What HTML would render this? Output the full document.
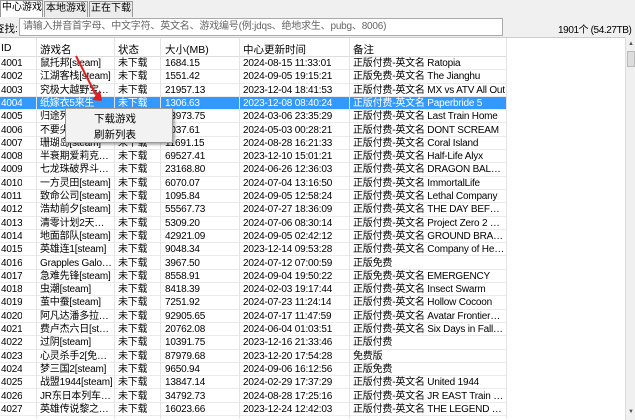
<!DOCTYPE html>
<html><head><meta charset="utf-8"><style>
*{margin:0;padding:0;box-sizing:border-box}
body{width:635px;height:420px;overflow:hidden;background:#f0f0f0;font-family:"Liberation Sans","Noto Sans CJK SC",sans-serif;font-size:10px;color:#000;position:relative;white-space:nowrap}
.tab{position:absolute;top:1px;height:16px;border:1px solid #999;border-bottom:none;background:#ececec;font-size:10px;line-height:14px;padding:0 1px;overflow:hidden;text-align:center}
.tab.a{background:#fff;top:0;height:17px}
#inp{position:absolute;left:19px;top:18px;width:484px;height:18px;background:#fff;border:1px solid #aaa;color:#666;font-size:10px;line-height:16px;padding-left:3px;overflow:hidden;letter-spacing:-0.2px}
#tbl{position:absolute;left:0;top:37px;width:625px;height:383px;background:#fff;border-top:1px solid #ccc}
.hd{position:absolute;top:0;height:19px;left:0;width:506px;background:#fff;border-bottom:1px solid #ddd}
.hd span{position:absolute;top:4px;font-size:10.5px}
.row{position:absolute;left:0;width:506px;height:13.3px;border-bottom:1px solid #ebebeb}
.row span{position:absolute;top:0;line-height:13px;font-size:10px;overflow:hidden;letter-spacing:-0.2px;text-overflow:ellipsis}
.sel{background:#3399ff;color:#fff}
.v{position:absolute;top:0;width:1px;height:381px;background:#e4e4e4}
#sb{position:absolute;left:625px;top:37px;width:10px;height:383px;background:#f0f0f0;border-left:1px solid #ddd}
#menu{position:absolute;left:65px;top:108px;width:108px;height:35px;background:#f2f2f2;border:1px solid #999;box-shadow:2px 2px 2px rgba(0,0,0,.3);font-size:10.5px}
#menu div{position:absolute;left:28px}
</style></head><body>
<div class="tab a" style="left:0;width:43px">中心游戏</div>
<div class="tab" style="left:44px;width:44px">本地游戏</div>
<div class="tab" style="left:89px;width:44px">正在下载</div>
<div style="position:absolute;left:-6px;top:21px;font-size:10.5px">查找:</div>
<div id="inp">请输入拼音首字母、中文字符、英文名、游戏编号(例:jdqs、绝地求生、pubg、8006)</div>
<div style="position:absolute;left:558px;top:21px;font-size:10px;letter-spacing:-0.4px">1901个 (54.27TB)</div>
<div id="tbl">
<div class="hd"><span style="left:1px">ID</span><span style="left:40px">游戏名</span><span style="left:118px">状态</span><span style="left:165px">大小(MB)</span><span style="left:243px">中心更新时间</span><span style="left:353px">备注</span></div>
<div id="rows"></div>
<div class="v" style="left:36px"></div><div class="v" style="left:114px"></div><div class="v" style="left:160px"></div><div class="v" style="left:239px"></div><div class="v" style="left:349px"></div><div class="v" style="left:506px"></div>
</div>
<div id="sb"><div style="position:absolute;left:1px;top:14px;width:8px;height:16px;background:#ddd;border:1px solid #bbb"></div><div style="position:absolute;left:2px;top:4px;font-size:6px;color:#555">▲</div><div style="position:absolute;left:2px;top:372px;font-size:6px;color:#555">▼</div></div>
<script>
var d=[
["4001","鼠托邦[steam]","1684.15","2024-08-15 11:33:01","正版付费-英文名 Ratopia"],
["4002","江湖客栈[steam]","1551.42","2024-09-05 19:15:21","正版免费-英文名 The Jianghu"],
["4003","究极大越野宝…","21957.13","2023-12-04 18:41:53","正版付费-英文名 MX vs ATV All Out"],
["4004","纸嫁衣5来生","1306.63","2023-12-08 08:40:24","正版付费-英文名 Paperbride 5"],
["4005","归途列车[steam]","23973.75","2024-03-06 23:35:29","正版付费-英文名 Last Train Home"],
["4006","不要尖叫[steam]","4037.61","2024-05-03 00:28:21","正版付费-英文名 DONT SCREAM"],
["4007","珊瑚岛[steam]","11691.15","2024-08-28 16:21:33","正版付费-英文名 Coral Island"],
["4008","半衰期爱莉克…","69527.41","2023-12-10 15:01:21","正版付费-英文名 Half-Life Alyx"],
["4009","七龙珠破界斗…","23168.80","2024-06-26 12:36:03","正版付费-英文名 DRAGON BALL TH..."],
["4010","一方灵田[steam]","6070.07","2024-07-04 13:16:50","正版付费-英文名 ImmortalLife"],
["4011","致命公司[steam]","1095.84","2024-09-05 12:58:24","正版付费-英文名 Lethal Company"],
["4012","浩劫前夕[steam]","55567.73","2024-07-27 18:36:09","正版付费-英文名 THE DAY BEFORE"],
["4013","清零计划2天…","5309.20","2024-07-06 08:30:14","正版付费-英文名 Project Zero 2 DE..."],
["4014","地面部队[steam]","42921.09","2024-09-05 02:42:12","正版付费-英文名 GROUND BRANCH"],
["4015","英雄连1[steam]","9048.34","2023-12-14 09:53:28","正版付费-英文名 Company of Heroes"],
["4016","Grapples Galore…","3967.50","2024-07-12 07:00:59","正版免费"],
["4017","急难先锋[steam]","8558.91","2024-09-04 19:50:22","正版免费-英文名 EMERGENCY"],
["4018","虫潮[steam]","8418.39","2024-02-03 19:17:44","正版付费-英文名 Insect Swarm"],
["4019","茧中蚕[steam]","7251.92","2024-07-23 11:24:14","正版付费-英文名 Hollow Cocoon"],
["4020","阿凡达潘多拉…","92905.65","2024-07-17 11:47:59","正版付费-英文名 Avatar Frontiers ..."],
["4021","费卢杰六日[st…","20762.08","2024-06-04 01:03:51","正版付费-英文名 Six Days in Fallujah"],
["4022","过阴[steam]","10391.75","2023-12-16 21:33:46","正版付费"],
["4023","心灵杀手2[免…","87979.68","2023-12-20 17:54:28","免费版"],
["4024","梦三国2[steam]","9650.94","2024-09-06 16:12:56","正版免费"],
["4025","战盟1944[steam]","13847.14","2024-02-29 17:37:29","正版付费-英文名 United 1944"],
["4026","JR东日本列车…","34792.73","2024-08-28 17:25:16","正版付费-英文名 JR EAST Train Si..."],
["4027","英雄传说黎之…","16023.66","2023-12-24 12:42:03","正版付费-英文名 THE LEGEND OF ..."]];
var h="";
d.forEach(function(r,i){
h+='<div class="row'+(i==3?' sel':'')+'" style="top:'+(19+i*13.3).toFixed(1)+'px"><span style="left:1px">'+r[0]+'</span><span style="left:40px;width:74px">'+r[1]+'</span><span style="left:118px">未下载</span><span style="left:165px">'+r[2]+'</span><span style="left:243px">'+r[3]+'</span><span style="left:353px;width:152px">'+r[4]+'</span></div>';});
document.getElementById("rows").innerHTML=h;
</script>
<svg style="position:absolute;left:0;top:0" width="635" height="420"><line x1="76" y1="56" x2="96" y2="95" stroke="#e02020" stroke-width="2"/><polygon points="92,100 102,101 100,90" fill="#e02020"/></svg>
<div id="menu"><div style="top:2px">下载游戏</div><div style="top:18px">刷新列表</div></div>
</body></html>
